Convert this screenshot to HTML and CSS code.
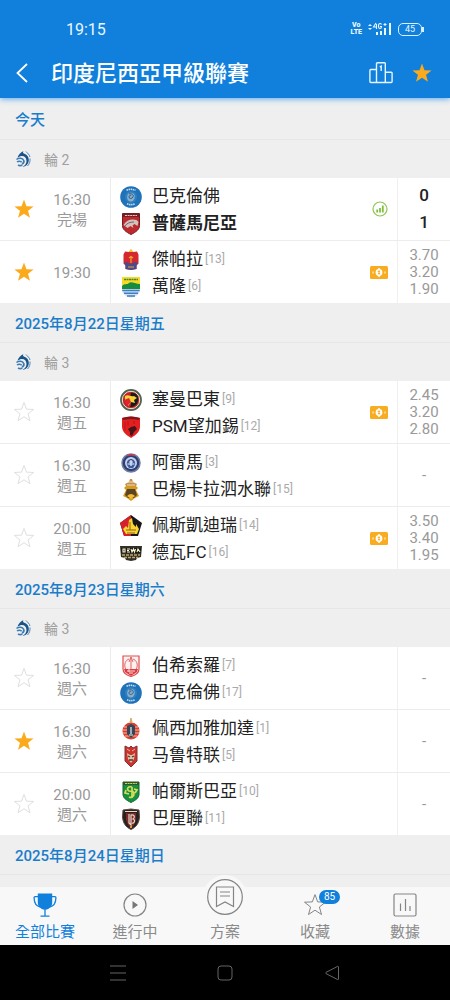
FILE: index.html
```html
<!DOCTYPE html>
<html lang="zh-Hant">
<head>
<meta charset="utf-8">
<meta name="viewport" content="width=device-width, initial-scale=1">
<title>印度尼西亞甲級聯賽</title>
<link rel="stylesheet" href="styles.css">
</head>
<body>
<svg class="sprite" aria-hidden="true">
  <symbol id="star" viewBox="0 0 24 24"><path d="M12 1.600l2.700 7.300 7.800.3-6.100 4.800 2.100 7.500-6.500-4.300-6.500 4.300 2.100-7.500L1.500 9.200l7.800-.3z"/></symbol>
  <symbol id="league" viewBox="0 0 16 18"><path d="M8.500 1c-.8 1.200-.6 2 .3 2.500C12 4.500 14 7 13.800 10.500c-.3 3.500-3 6-6.300 6.500 2.500-1.500 4-3.500 4-6C11.500 7.500 9 5.500 6 6L2.500 7.500C3.500 4.500 5.500 2.500 8.500 1z" fill="#1b5288"/><path d="M1.500 9.500c2.500-2 6-1.500 7.200.8.600 1.500 0 3-1.700 3.700M2 12c1.500-1.200 3.800-1 4.700.3M3 15c1.300.8 3 .8 4.300-.2" fill="none" stroke="#3b7cb5" stroke-width="1.600"/><path d="M11 1.500c1.500 1.800 3.500 3 4 5.500M15 8.500c.3 3-.6 5.500-2.500 7.500" fill="none" stroke="#4a86ba" stroke-width="1"/></symbol>
  <symbol id="money" viewBox="0 0 18 13"><rect width="18" height="13" rx="1.500" fill="#f8ac20"/><circle cx="9" cy="6.500" r="3.400" fill="#fff"/><path d="M9 2v9" stroke="#fff" stroke-width="1.500"/><path d="M9 4.300v4.400M7.700 5.500h2.200M7.900 7.500h2.200" stroke="#f8ac20" stroke-width=".9"/><path d="M3 5.500v2M15 5.500v2" stroke="#fff"/></symbol>
  <symbol id="persib-blue" viewBox="0 0 22 22"><circle cx="11" cy="11" r="10.800" fill="#1f72b8"/><circle cx="11" cy="11" r="6" fill="#2d80c2"/><path d="M7.500 9c1-3 6-3 7 0s-1 7-4 6.500S6.500 12 7.500 9z" fill="#8badc6"/><path d="M9 8c3-1 5 1 4 3s-4 2-4 0 2-2 2-1" fill="none" stroke="#2a5f91"/><path d="M6.500 4.300q4.500-2 9 0M7 17.800q4 1.700 8 0" fill="none" stroke="#c5dff1" stroke-width="1.600" stroke-dasharray="1.500 .6"/></symbol>
  <symbol id="borneo" viewBox="0 0 22 22"><path d="M2.500.5h17v12c0 4-3.500 6.500-8.500 9-5-2.500-8.500-5-8.500-9z" fill="#bd292e" stroke="#731c22"/><path d="M3 1h16v3H3z" fill="#712027"/><path d="M5 2.500h12" stroke="#e6c7c7" stroke-dasharray="2 .6"/><path d="M3.500 12c3-5 8-6.500 13-5l2 2-1 4-3-2-2 1.500 1 2.500-3-2-3 2z" fill="#d2c2be"/><path d="M5 13c2-3 5-4 9-4" stroke="#776063" fill="none"/></symbol>
  <symbol id="jepara" viewBox="0 0 22 22"><path d="M9 3l2-2.500L13 3l4-.5 1.500 3v9l-2 2V20L11 21l-5.500-1v-3.500l-2-2v-9L5 2.500z" fill="#d52730"/><path d="M8.500 3l2.500-3 2.500 3z" fill="#f5c520"/><path d="M4 14l3-1 4 2 4-2 3 1-1.500 2.500V20L11 21l-5.500-1v-3.500z" fill="#4a4a8c"/><path d="M11 7v7M9 9l2-1.500L13 9M8 18h6" stroke="#eda435" fill="none" stroke-width="1.200"/></symbol>
  <symbol id="bandung" viewBox="0 0 22 22"><path d="M2 1h18v12c0 5-4 8-9 8.500C6 21 2 18 2 13z" fill="#cfe0f2"/><path d="M2 1h18v8H2z" fill="#f4dc25"/><path d="M2 10c3-3 5-1 7-3s6 1 11 1v5H2z" fill="#178b3e"/><path d="M4 3.500h14" stroke="#4e7f38" stroke-width="1.600" stroke-dasharray="2 .5"/><path d="M2.300 14.500h17.400M4 17.300h14M7 20h8" stroke="#407dc4" stroke-width="1.500"/></symbol>
  <symbol id="semen" viewBox="0 0 22 22"><circle cx="11" cy="11" r="10" fill="#c22329" stroke="#4d6250" stroke-width="1.800"/><circle cx="11" cy="11" r="8.700" fill="none" stroke="#ece6cf"/><path d="M11 4c5-1 8 3 7 8-1 4-4 6-8 6 2-3 0-4 2-6s-3-4-1-8z" fill="#191a1c"/><path d="M5 7c4-2 5 1 9 0l3 2-3 2 1 3-4-1-3 4c0-4-4-4-3-10z" fill="#f7d334"/><path d="M4 11l5-2 2 4-4 4z" fill="#df2630"/></symbol>
  <symbol id="psm" viewBox="0 0 22 22"><path d="M2 2q9-3 18 0v9c-.5 5-4 8-9 11-5-3-8.500-6-9-11z" fill="#e31f20"/><path d="M2 2q9-3 18 0l-1.500 2q-7.500-2-15 0z" fill="#791b1e"/><path d="M8 13l3-2 4-1 2 3-3 3-2 4-2-1v-3z" fill="#461519"/><path d="M5 6v8M8 5v5M14 5v3" stroke="#b51719"/></symbol>
  <symbol id="arema" viewBox="0 0 22 22"><circle cx="11" cy="11" r="9" fill="#2c4078" stroke="#717d9e" stroke-width="1.500"/><circle cx="11" cy="11" r="6" fill="#c9d2e6"/><path d="M7 13c-1-4 2-6 4-6s5 2 4 6l-2 3H9z" fill="#3d5a9e"/><path d="M7.500 12h7M11 8v6M9 10h4" stroke="#f0f3fa" stroke-width="1.200"/><path d="M7 3.500q4-1.500 8 0" stroke="#cb3e56" fill="none" stroke-width="1.600"/></symbol>
  <symbol id="bhayangkara" viewBox="0 0 22 22"><path d="M10 0h2l1 3 4 2-1 2H6L5 5l4-2z" fill="#c09152"/><path d="M8 3h6M7 6h8" stroke="#f6dfa9"/><path d="M6 7h10l2 2-2 2 3 6-4 2-4 3-4-3-4-2 3-6-2-2z" fill="#d69a20"/><path d="M7 10h8l2 6-3 3H8l-3-3z" fill="#5b4426"/><path d="M7 17q4-4 8 0l-4 3z" fill="#f5bd2d"/></symbol>
  <symbol id="kediri" viewBox="0 0 22 22"><path d="M11 0l11 8-4 13H4L0 8z" fill="#17171a"/><path d="M11 0v21H4L0 8z" fill="#d6212d"/><path d="M9 5l3-2 1 6 3 3v-3l3 5-2 5H6l-3-5 3-3 2 2z" fill="#f9d62f"/><path d="M10 7v8M6 15h10M7 18h8" stroke="#945c22"/></symbol>
  <symbol id="dewa" viewBox="0 0 22 22"><path d="M0 4h22l-1 11-4 1-1 2-5 1-5-1-1-2-4-1z" fill="#303027"/><path d="M1 6h20l-.5 5h-19z" fill="#17180f"/><path d="M3 7v3h2V7zM7 7h3M7 8.500h2M7 10h3M11 7l1 3 1.500-3 1 3 1-3M17 10l1-3 2 3" fill="none" stroke="#fff5d7" stroke-width="1.100"/><path d="M2 13h18M4 15.500h14" stroke="#bca26b" stroke-width="1.500" stroke-dasharray="3 1"/></symbol>
  <symbol id="solo" viewBox="0 0 22 22"><path d="M3 1h16v13c0 4-3 6-8 7.500C6 20 3 18 3 14z" fill="#fff0ee" stroke="#de4e52" stroke-width="1.200"/><path d="M11 2v12M9 7l2-5 2 5M6 15c-3-6 0-10 3-11M16 15c3-6 0-10-3-11" fill="none" stroke="#db666a"/><path d="M4 14h14l-1 3-6 4-6-4z" fill="#dd3d42"/><path d="M7 16h8M9 18h4M9 14v3" stroke="#fbd6d1"/></symbol>
  <symbol id="jakarta" viewBox="0 0 22 22"><path d="M11 0l1 4h-2z" fill="#efb631" stroke="#caac66"/><circle cx="11" cy="13" r="8.500" fill="#dc3e2e"/><path d="M4 9h14M3 12h16M3 15h16M5 18h12" stroke="#f6b7a5" stroke-width="1.200"/><path d="M7 8l4-2 4 2v8l-4 4-4-4z" fill="#33475a"/><path d="M11 9v7M9 17h4" stroke="#eee" stroke-width="1.200"/></symbol>
  <symbol id="malut" viewBox="0 0 22 22"><path d="M5 1l4 2 2-2 2 2 4-2v15l-6 6-6-6z" fill="#ca332e" stroke="#853331"/><path d="M7 8l3 2h2l3-2-1 6-3 4-3-4z" fill="#d9c6a7"/><path d="M8 11l2 1M14 11l-2 1M9 15h4" stroke="#54352e" stroke-width="1.300"/><path d="M7 4l3 2M15 4l-3 2" stroke="#f0b3a3"/></symbol>
  <symbol id="surabaya" viewBox="0 0 22 22"><path d="M3 1h16v12c0 4-3 6-8 8.500C6 19 3 17 3 13z" fill="#16913f" stroke="#116332"/><path d="M3 1h16v3H3z" fill="#31552a"/><path d="M5 2.500h12" stroke="#ddce55" stroke-dasharray="2 .6"/><path d="M12 6c-4-1-6 2-3 4 3 0 5 0 5 3s-3 4-5 3M12 6v11M14 8l3 1-2 3M6 9l-1 3 4 1" fill="none" stroke="#d9dc5a" stroke-width="1.700"/></symbol>
  <symbol id="bali" viewBox="0 0 22 22"><path d="M3 2l8-1 8 1 .5 7c-.5 6-3 10-8.500 12.500C5.500 19 3 15 2.500 9z" fill="#26221f" stroke="#5d4b43"/><path d="M6 5h10v7l-2 5-3 3-3-3-2-5z" fill="#7d2928"/><path d="M9 6v9l2 2V7c4-1 4 3 2 4 3 1 1 5-1 4M5 3.500h12" fill="none" stroke="#e5dbca" stroke-width="1.200"/><path d="M10 18h2v2h-2z" fill="#e39638"/></symbol>
</svg>

<header class="top">
  <div class="status">
    <span class="clock">19:15</span>
    <span class="status-icons">
      <span class="volte"><span>Vo</span><span>LTE</span></span>
      <svg class="signal" viewBox="0 0 24 14" fill="#e8f8ff"><path d="M0 4l2-2 2 2zM0 6h4L2 8zM8 13v-3h2v3zM12 13V9h2v4zM16 13V6h2v7zM21 13V1h2v12z"/><path d="M8 1L5.500 5H9M8.500 2v5M13.500 2.500Q13 1.500 12 1.500q-1.500 0-1.500 2.500t1.500 2.500q1.500 0 1.500-2H12M15.500 2.500h3M17 1v3" fill="none" stroke="#e8f8ff" stroke-width="1.100"/></svg>
      <span class="battery">45</span>
    </span>
  </div>
  <div class="appbar">
    <button class="icon-button back" aria-label="返回"><svg viewBox="0 0 12 20"><path d="M11 1L1.500 10 11 19" fill="none" stroke="#fff" stroke-width="1.800"/></svg></button>
    <h1 class="title">印度尼西亞甲級聯賽</h1>
    <button class="icon-button podium" aria-label="排名"><svg viewBox="0 0 24 22" fill="none" stroke="#e6f5ff" stroke-width="1.400"><path d="M7.500 20.500V1.500q0-.8.8-.8h7.200q.8 0 .8.800v19M7.500 7.500H1.800q-.9 0-.9.900v11.200q0 .9.900.9h20.400q.9 0 .9-.9v-8.500q0-.9-.9-.9h-5.900M10.800 5l1.400-1v5"/></svg></button>
    <button class="icon-button fav" aria-label="收藏聯賽"><svg><use href="#star"/></svg></button>
  </div>
</header>

<main class="list">
  <section>
    <h2 class="date first">今天</h2>
    <h3 class="round"><svg><use href="#league"/></svg>輪 2</h3>
    <article class="match">
      <button class="star on" aria-label="收藏"><svg><use href="#star"/></svg></button>
      <div class="time"><span>16:30</span><span>完場</span></div>
      <div class="teams">
        <div class="team"><svg><use href="#persib-blue"/></svg>巴克倫佛</div>
        <div class="team winner"><svg><use href="#borneo"/></svg>普薩馬尼亞</div>
      </div>
      <svg class="stats" viewBox="0 0 16 16"><circle cx="8" cy="8" r="7" fill="none" stroke="#8cc652" stroke-width="1.200"/><path d="M5.200 11.500V8.500M8 11.500V7M10.800 11.500V4.500" stroke="#7fbf3e" stroke-width="1.800"/></svg>
      <div class="odds score"><span>0</span><span>1</span></div>
    </article>
    <article class="match">
      <button class="star on" aria-label="收藏"><svg><use href="#star"/></svg></button>
      <div class="time"><span>19:30</span></div>
      <div class="teams">
        <div class="team"><svg><use href="#jepara"/></svg>傑帕拉<span class="rank">[13]</span></div>
        <div class="team"><svg><use href="#bandung"/></svg>萬隆<span class="rank">[6]</span></div>
      </div>
      <svg class="money"><use href="#money"/></svg>
      <div class="odds"><span>3.70</span><span>3.20</span><span>1.90</span></div>
    </article>
  </section>

  <section>
    <h2 class="date">2025年8月22日星期五</h2>
    <h3 class="round"><svg><use href="#league"/></svg>輪 3</h3>
    <article class="match">
      <button class="star" aria-label="收藏"><svg><use href="#star"/></svg></button>
      <div class="time"><span>16:30</span><span>週五</span></div>
      <div class="teams">
        <div class="team"><svg><use href="#semen"/></svg>塞曼巴東<span class="rank">[9]</span></div>
        <div class="team"><svg><use href="#psm"/></svg>PSM望加錫<span class="rank">[12]</span></div>
      </div>
      <svg class="money"><use href="#money"/></svg>
      <div class="odds"><span>2.45</span><span>3.20</span><span>2.80</span></div>
    </article>
    <article class="match">
      <button class="star" aria-label="收藏"><svg><use href="#star"/></svg></button>
      <div class="time"><span>16:30</span><span>週五</span></div>
      <div class="teams">
        <div class="team"><svg><use href="#arema"/></svg>阿雷馬<span class="rank">[3]</span></div>
        <div class="team"><svg><use href="#bhayangkara"/></svg>巴楊卡拉泗水聯<span class="rank">[15]</span></div>
      </div>
      <div class="odds"><span>-</span></div>
    </article>
    <article class="match">
      <button class="star" aria-label="收藏"><svg><use href="#star"/></svg></button>
      <div class="time"><span>20:00</span><span>週五</span></div>
      <div class="teams">
        <div class="team"><svg><use href="#kediri"/></svg>佩斯凱迪瑞<span class="rank">[14]</span></div>
        <div class="team"><svg><use href="#dewa"/></svg>德瓦FC<span class="rank">[16]</span></div>
      </div>
      <svg class="money"><use href="#money"/></svg>
      <div class="odds"><span>3.50</span><span>3.40</span><span>1.95</span></div>
    </article>
  </section>

  <section>
    <h2 class="date">2025年8月23日星期六</h2>
    <h3 class="round"><svg><use href="#league"/></svg>輪 3</h3>
    <article class="match">
      <button class="star" aria-label="收藏"><svg><use href="#star"/></svg></button>
      <div class="time"><span>16:30</span><span>週六</span></div>
      <div class="teams">
        <div class="team"><svg><use href="#solo"/></svg>伯希索羅<span class="rank">[7]</span></div>
        <div class="team"><svg><use href="#persib-blue"/></svg>巴克倫佛<span class="rank">[17]</span></div>
      </div>
      <div class="odds"><span>-</span></div>
    </article>
    <article class="match">
      <button class="star on" aria-label="收藏"><svg><use href="#star"/></svg></button>
      <div class="time"><span>16:30</span><span>週六</span></div>
      <div class="teams">
        <div class="team"><svg><use href="#jakarta"/></svg>佩西加雅加達<span class="rank">[1]</span></div>
        <div class="team"><svg><use href="#malut"/></svg>马鲁特联<span class="rank">[5]</span></div>
      </div>
      <div class="odds"><span>-</span></div>
    </article>
    <article class="match">
      <button class="star" aria-label="收藏"><svg><use href="#star"/></svg></button>
      <div class="time"><span>20:00</span><span>週六</span></div>
      <div class="teams">
        <div class="team"><svg><use href="#surabaya"/></svg>帕爾斯巴亞<span class="rank">[10]</span></div>
        <div class="team"><svg><use href="#bali"/></svg>巴厘聯<span class="rank">[11]</span></div>
      </div>
      <div class="odds"><span>-</span></div>
    </article>
  </section>

  <section>
    <h2 class="date">2025年8月24日星期日</h2>
    <div class="round"></div>
  </section>
</main>

<nav class="tabs">
  <a class="tab active" href="#"><svg class="tab-icon" viewBox="0 0 24 24"><path d="M4.800.5h14.400v9.500q0 2.500-1.800 4.300-2.400 2.700-5.400 2.700t-5.400-2.700Q4.800 12.500 4.800 10z" fill="#117fdc"/><path d="M5 3.700H2.200q-1.200 0-1.100 1.300.2 8 6.400 9M19 3.700h2.800q1.200 0 1.100 1.300-.2 8-6.400 9M12 17v6M7.500 23.200h9" fill="none" stroke="#117fdc" stroke-width="1.300"/></svg>全部比賽</a>
  <a class="tab" href="#"><svg class="tab-icon" viewBox="0 0 24 24"><circle cx="12" cy="12" r="11" fill="none" stroke="#858585" stroke-width="1.200"/><path d="M9.500 8v8l5.500-4z" fill="#777"/></svg>進行中</a>
  <a class="tab plan" href="#"><span class="bump"><svg viewBox="0 0 36 36" fill="none" stroke="#858585" stroke-width="1.200"><circle cx="18" cy="18" r="17.300"/><path d="M9.500 8h17v19.500L18 23l-8.500 4.500zM13 13h10M13 17h10"/></svg></span>方案</a>
  <a class="tab" href="#"><svg class="tab-icon outline" viewBox="0 0 24 24"><use href="#star"/></svg><span class="count">85</span>收藏</a>
  <a class="tab" href="#"><svg class="tab-icon" viewBox="0 0 24 24" fill="none" stroke="#858585" stroke-width="1.200"><rect x="1" y="1" width="22" height="22" rx="1.500"/><path d="M7.500 10.500V18M12.500 6v12M17 13v5"/></svg>數據</a>
</nav>

<div class="system">
  <button class="sys" aria-label="選單"><svg viewBox="0 0 18 18"><path d="M1 2h16M1 9h16M1 16h16"/></svg></button>
  <button class="sys" aria-label="主頁"><svg viewBox="0 0 18 18"><rect x="2" y="2" width="14" height="14" rx="3"/></svg></button>
  <button class="sys" aria-label="返回鍵"><svg viewBox="0 0 18 18"><path d="M15.500 3v12q0 1-1 .5L3 9.600q-1-.6 0-1.200l11.500-6q1-.4 1 .6z"/></svg></button>
</div>
</body>
</html>
```

FILE: styles.css
```css
* { box-sizing: border-box; }

body {
  margin: 0;
  height: 100vh;
  display: flex;
  flex-direction: column;
  background: #efefef;
  color: #222;
  font-family: Roboto, "Noto Sans CJK TC", sans-serif;
}

button { border: 0; padding: 0; background: none; font: inherit; }
h1, h2, h3 { margin: 0; }
svg { display: block; flex: none; }
.sprite { position: absolute; width: 0; height: 0; }

.top {
  flex: none;
  position: relative;
  z-index: 1;
  background: #117fdc;
  color: #fff;
  box-shadow: 0 1px 6px #5aa8ec;
}
.status {
  height: 48px;
  padding: 10px 28px 0 66px;
  display: flex;
  align-items: center;
  justify-content: space-between;
  color: #e8f8ff;
}
.clock { font-size: 16px; }
.status-icons { display: flex; align-items: center; gap: 6px; }
.volte {
  display: flex;
  flex-direction: column;
  font-size: 7px;
  line-height: 7px;
  font-weight: 900;
  text-align: center;
}
.signal { width: 24px; height: 14px; }
.battery {
  position: relative;
  width: 24px;
  border: 1px solid #d8efff;
  border-radius: 5px;
  font-size: 9px;
  line-height: 11px;
  text-align: center;
}
.battery::after {
  content: "";
  position: absolute;
  right: -3px;
  top: 3px;
  width: 2px;
  height: 5px;
  background: #d8efff;
}
.appbar {
  height: 50px;
  padding: 0 17px 0 16px;
  display: flex;
  align-items: center;
}
.back { width: 35px; }
.back svg { width: 12px; height: 20px; }
.title {
  flex: 1;
  padding-top: 2px;
  font-size: 22px;
  line-height: 30px;
  font-weight: 500;
}
.podium svg { width: 24px; height: 22px; }
.fav { margin-left: 18px; }
.fav svg { width: 22px; height: 22px; fill: #fbaa1b; }

.list { flex: 1; min-height: 0; overflow: hidden; }
.date {
  height: 40px;
  padding-left: 15px;
  border-bottom: 1px solid #e6e6e6;
  color: #1a7dca;
  font-size: 15px;
  line-height: 42px;
  font-weight: 500;
}
.date.first { height: 42px; line-height: 44px; }
.round {
  height: 38px;
  padding-left: 15px;
  display: flex;
  align-items: center;
  gap: 13px;
  color: #a0a0a0;
  font-size: 14px;
  font-weight: 400;
}
.round svg { width: 16px; height: 18px; }

.match {
  height: 63px;
  display: flex;
  align-items: center;
  background: #fff;
  border-bottom: 1px solid #ececec;
}
.match:last-child { height: 62px; border-bottom: 0; }
.star { width: 48px; display: flex; justify-content: center; }
.star svg { width: 22px; height: 22px; fill: none; stroke: #dcdcdc; stroke-width: 1px; }
.star.on svg { fill: #fbaa1b; stroke: none; }
.time {
  width: 63px;
  height: 100%;
  padding: 2px 14px 0 0;
  border-right: 1px solid #ececec;
  display: flex;
  flex-direction: column;
  justify-content: center;
  align-items: center;
  color: #999;
  font-size: 15px;
  line-height: 20px;
}
.teams { flex: 1; padding: 2px 0 0 9px; }
.team {
  display: flex;
  align-items: center;
  font-size: 17px;
  line-height: 27px;
}
.team svg { width: 22px; height: 22px; margin-right: 10px; }
.winner { font-weight: 700; }
.rank { margin-left: 2px; color: #aaa; font-size: 12px; }
.stats { width: 16px; height: 16px; margin-right: 9px; }
.money { width: 18px; height: 13px; margin-right: 9px; }
.odds {
  width: 53px;
  height: 100%;
  border-left: 1px solid #f0f0f0;
  display: flex;
  flex-direction: column;
  justify-content: center;
  align-items: center;
  color: #999;
  font-size: 15px;
  line-height: 17px;
}
.score { color: #222; font-size: 17px; line-height: 27px; font-weight: 500; }

.tabs {
  flex: none;
  position: relative;
  height: 58px;
  display: flex;
  background: #f8f8f8;
}
.tab {
  flex: 1;
  position: relative;
  padding-top: 6px;
  display: flex;
  flex-direction: column;
  align-items: center;
  gap: 4px;
  color: #8a8a8a;
  font-size: 15px;
  line-height: 22px;
  text-decoration: none;
}
.tab.active { color: #117fdc; }
.tab-icon { width: 24px; height: 24px; }
.outline { fill: none; stroke: #858585; stroke-width: 1px; }
.count {
  position: absolute;
  left: 50%;
  top: 3px;
  margin-left: 4px;
  width: 21px;
  border-radius: 7px;
  background: #117fdc;
  color: #fff;
  font-size: 10px;
  line-height: 14px;
  text-align: center;
}
.bump {
  margin-top: -18px;
  padding: 4px;
  border-radius: 50%;
  background: #f8f8f8;
}
.bump svg { width: 36px; height: 36px; }
.plan { gap: 2px; }

.system {
  flex: none;
  height: 55px;
  padding: 0 64px;
  display: flex;
  background: #000;
}
.sys {
  flex: 1;
  display: flex;
  align-items: center;
  justify-content: center;
}
.sys svg { width: 18px; height: 18px; fill: none; stroke: #656565; stroke-width: 1px; }
```
